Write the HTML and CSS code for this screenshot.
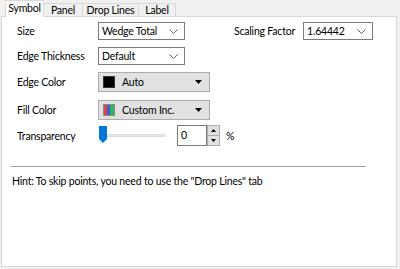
FILE: index.html
```html
<!DOCTYPE html>
<html>
<head>
<meta charset="utf-8">
<link rel="stylesheet" href="styles.css">
</head>
<body>
<div class="tabs">
  <div class="tab active">Symbol</div>
  <div class="tab t-panel">Panel</div>
  <div class="tab t-drop">Drop Lines</div>
  <div class="tab t-label">Label</div>
</div>
<div class="panel">
  <div class="row r-size">
    <div class="lbl">Size</div>
    <div class="combo c-size"><span class="val">Wedge Total</span><svg class="chev" width="9" height="5" viewBox="0 0 9 5"><polyline points="0.5,0.5 4.5,4.5 8.5,0.5" fill="none" stroke="#606060" stroke-width="1"/></svg></div>
    <div class="lbl sc-lbl">Scaling Factor</div>
    <div class="combo c-scale"><span class="val">1.64442</span><svg class="chev" width="9" height="5" viewBox="0 0 9 5"><polyline points="0.5,0.5 4.5,4.5 8.5,0.5" fill="none" stroke="#606060" stroke-width="1"/></svg></div>
  </div>
  <div class="row r-thick">
    <div class="lbl">Edge Thickness</div>
    <div class="combo c-size"><span class="val">Default</span><svg class="chev" width="9" height="5" viewBox="0 0 9 5"><polyline points="0.5,0.5 4.5,4.5 8.5,0.5" fill="none" stroke="#606060" stroke-width="1"/></svg></div>
  </div>
  <div class="row r-edge">
    <div class="lbl">Edge Color</div>
    <div class="ccombo"><span class="swatch black"></span><span class="val">Auto</span><svg class="tri" width="7" height="4" viewBox="0 0 7 4"><polygon points="0,0 7,0 3.5,4" fill="#000"/></svg></div>
  </div>
  <div class="row r-fill">
    <div class="lbl">Fill Color</div>
    <div class="ccombo"><span class="swatch multi"><i class="red"></i><i class="blue"></i><i class="green"></i></span><span class="val">Custom Inc.</span><svg class="tri" width="7" height="4" viewBox="0 0 7 4"><polygon points="0,0 7,0 3.5,4" fill="#000"/></svg></div>
  </div>
  <div class="row r-trans">
    <div class="lbl">Transparency</div>
    <div class="slider"><div class="track"></div><svg class="thumb" width="8" height="17" viewBox="0 0 8 17"><polygon points="0,0 8,0 8,13 4,17 0,13" fill="#0078d7"/></svg></div>
    <div class="spin"><div class="spin-text">0</div><div class="spin-btns"><div class="sb"><svg width="5" height="3" viewBox="0 0 5 3"><polygon points="0,3 5,3 2.5,0" fill="#000"/></svg></div><div class="sb"><svg width="5" height="3" viewBox="0 0 5 3"><polygon points="0,0 5,0 2.5,3" fill="#000"/></svg></div></div></div>
    <div class="pct">%</div>
  </div>
  <div class="sep"></div>
  <div class="hint">Hint: To skip points, you need to use the "Drop Lines" tab</div>
</div>
</body>
</html>
```
FILE: styles.css
```css
html, body {
  margin: 0;
  padding: 0;
}
body {
  width: 400px;
  height: 269px;
  background: #f0f0f0;
  font-family: Lato, "Noto Sans", sans-serif;
  font-size: 10.5px;
  letter-spacing: -0.2px;
  color: #000;
  overflow: hidden;
  box-sizing: border-box;
  padding: 0 3px 2px 1px;
  white-space: nowrap;
}
.tabs {
  display: flex;
  height: 16px;
  padding-left: 4px;
  align-items: flex-end;
  position: relative;
  z-index: 2;
}
.tab {
  height: 13px;
  border: 1px solid #d9d9d9;
  border-bottom: none;
  background: #f0f0f0;
  box-sizing: border-box;
  display: flex;
  align-items: center;
  justify-content: center;
  line-height: 13px;
  margin-left: -1px;
}
.tab.active {
  height: 17px;
  margin-bottom: -1px;
  background: #fff;
  width: 39px;
  margin-left: 0;
  padding-bottom: 1px;
}
.t-panel { width: 40px; }
.t-drop { width: 57px; }
.t-label { width: 38px; }
.panel {
  height: 251px;
  box-sizing: border-box;
  background: #fff;
  border: 1px solid #d9d9d9;
  padding: 5px 0 0 15px;
  position: relative;
  z-index: 1;
}
.row {
  display: flex;
  align-items: center;
}
.lbl {
  width: 81px;
  flex: none;
}
.combo {
  height: 18px;
  box-sizing: border-box;
  border: 1px solid #7a7a7a;
  background: #fff;
  display: flex;
  align-items: center;
  justify-content: space-between;
  padding: 0 6px 0 3px;
  flex: none;
}
.c-size { width: 87px; }
.c-scale { width: 70px; }
.sc-lbl {
  width: 69px;
  margin-left: 49px;
}
.r-size { height: 18px; }
.r-thick { height: 18px; margin-top: 7px; }
.r-edge { height: 20px; margin-top: 7px; }
.r-fill { height: 20px; margin-top: 8px; }
.r-trans { height: 21px; margin-top: 5px; }
.ccombo {
  width: 112px;
  height: 20px;
  box-sizing: border-box;
  border: 1px solid #adadad;
  background: #e1e1e1;
  display: flex;
  align-items: center;
  padding: 0 7px 0 4px;
  flex: none;
}
.ccombo .val {
  flex: 1;
  margin-left: 7px;
}
.swatch {
  width: 12px;
  height: 12px;
  box-sizing: border-box;
  display: flex;
}
.swatch.black {
  background: #000;
  border: 1px solid #333;
}
.swatch.multi {
  border: 1px solid #8a8a8a;
}
.swatch i { display: block; height: 100%; }
.swatch .red { width: 3px; background: #e8403a; }
.swatch .blue { width: 3px; background: #3b5bd9; }
.swatch .green { width: 4px; background: #2fb45a; }
.slider {
  width: 67px;
  height: 21px;
  position: relative;
  flex: none;
}
.track {
  position: absolute;
  left: 1px;
  right: 0;
  top: 9px;
  height: 3px;
  background: #e7e7e7;
  border: 1px solid #dcdcdc;
  box-sizing: border-box;
}
.thumb {
  position: absolute;
  left: 1px;
  top: 1px;
}
.spin {
  display: flex;
  margin-left: 12px;
  height: 21px;
}
.spin-text {
  width: 30px;
  height: 21px;
  box-sizing: border-box;
  border: 1px solid #7a7a7a;
  background: #fff;
  padding: 0 0 0 3px;
  line-height: 18px;
}
.spin-btns {
  width: 13px;
  height: 21px;
  display: flex;
  flex-direction: column;
}
.sb {
  flex: 1;
  border: 1px solid #adadad;
  background: #e1e1e1;
  box-sizing: border-box;
  display: flex;
  align-items: center;
  justify-content: center;
}
.sb + .sb { border-top: none; }
.pct {
  margin-left: 6px;
}
.sep {
  margin: 20px 0 0 -6px;
  width: 355px;
  height: 1px;
  background: #a0a0a0;
  border-bottom: 1px solid #fff;
}
.hint {
  margin: 7px 0 0 -5px;
}
```
